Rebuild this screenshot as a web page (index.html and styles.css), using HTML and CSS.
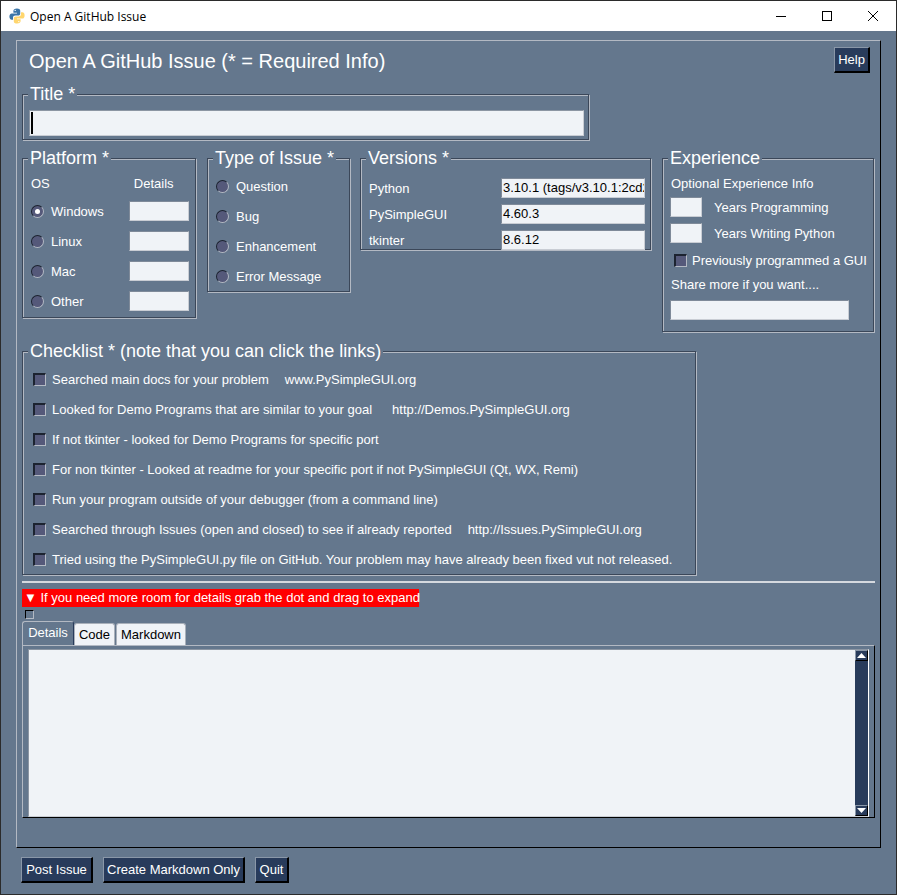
FILE: index.html
```html
<!DOCTYPE html>
<html lang="en">
<head>
<meta charset="utf-8">
<title>Open A GitHub Issue</title>
<link rel="stylesheet" href="styles.css">
</head>
<body>
<div class="window">
  <header class="titlebar">
    <svg class="applogo" viewBox="0 0 16 16" width="16" height="16"><path fill="#3a75a8" d="M8 0.5C5.6 0.5 4.4 1.4 4.4 3V4.8H8V5.4H2.8C1.2 5.4 0.4 6.8 0.4 8.6c0 2 .9 3.2 2.3 3.2H4V9.8c0-1.3 1-2.2 2.3-2.2h3c1 0 1.9-.9 1.9-1.9V2.6C11.2 1.2 9.8 .5 8 .5z"/><path fill="#ffd66e" d="M8 15.5c2.4 0 3.6-.9 3.6-2.5v-1.8H8v-.6h5.2c1.6 0 2.4-1.4 2.4-3.2 0-2-.9-3.2-2.3-3.2H12v2c0 1.3-1 2.2-2.3 2.2h-3c-1 0-1.9.9-1.9 1.9v3.1c0 1.4 1.4 2.1 3.2 2.1z"/><circle cx="6.2" cy="2.4" r=".7" fill="#fff"/><circle cx="9.8" cy="13.6" r=".7" fill="#fff"/></svg>
    <span class="apptitle">Open A GitHub Issue</span>
    <div class="winctl">
      <svg viewBox="0 0 10 10" width="10" height="10"><path d="M0 5.5H10" stroke="#000" fill="none"/></svg>
      <svg viewBox="0 0 10 10" width="10" height="10"><rect x=".5" y=".5" width="9" height="9" stroke="#000" fill="none"/></svg>
      <svg viewBox="0 0 10 10" width="10" height="10"><path d="M0 0L10 10M10 0L0 10" stroke="#000" fill="none"/></svg>
    </div>
  </header>

  <main class="content">
    <section class="frame">
      <div class="head">
        <h1 class="heading">Open A GitHub Issue (* = Required Info)</h1>
        <button class="btn help">Help</button>
      </div>

      <fieldset class="group g-title">
        <span class="legend">Title *</span>
        <div class="titleinput"><span class="caret"></span></div>
      </fieldset>

      <div class="row-groups">
        <fieldset class="group g-platform">
          <span class="legend">Platform *</span>
          <div class="os-head"><span>OS</span><span>Details</span></div>
          <div class="os-row"><span class="radio on"></span><span class="os-name">Windows</span><span class="input small"></span></div>
          <div class="os-row"><span class="radio"></span><span class="os-name">Linux</span><span class="input small"></span></div>
          <div class="os-row"><span class="radio"></span><span class="os-name">Mac</span><span class="input small"></span></div>
          <div class="os-row"><span class="radio"></span><span class="os-name">Other</span><span class="input small"></span></div>
        </fieldset>

        <fieldset class="group g-type">
          <span class="legend">Type of Issue *</span>
          <div class="type-row"><span class="radio"></span><span>Question</span></div>
          <div class="type-row"><span class="radio"></span><span>Bug</span></div>
          <div class="type-row"><span class="radio"></span><span>Enhancement</span></div>
          <div class="type-row"><span class="radio"></span><span>Error Message</span></div>
        </fieldset>

        <fieldset class="group g-versions">
          <span class="legend">Versions *</span>
          <div class="ver-row"><span class="ver-name">Python</span><span class="input ver">3.10.1 (tags/v3.10.1:2cd268a)</span></div>
          <div class="ver-row"><span class="ver-name">PySimpleGUI</span><span class="input ver">4.60.3</span></div>
          <div class="ver-row"><span class="ver-name">tkinter</span><span class="input ver">8.6.12</span></div>
        </fieldset>

        <fieldset class="group g-exp">
          <span class="legend">Experience</span>
          <div class="exp-line first">Optional Experience Info</div>
          <div class="exp-row"><span class="input years"></span><span>Years Programming</span></div>
          <div class="exp-row"><span class="input years"></span><span>Years Writing Python</span></div>
          <div class="exp-check"><span class="check"></span><span>Previously programmed a GUI</span></div>
          <div class="exp-line share">Share more if you want....</div>
          <span class="input sharebox"></span>
        </fieldset>
      </div>

      <fieldset class="group g-check">
        <span class="legend">Checklist * (note that you can click the links)</span>
        <div class="check-row"><span class="check"></span><span>Searched main docs for your problem</span><span class="link l1">www.PySimpleGUI.org</span></div>
        <div class="check-row"><span class="check"></span><span>Looked for Demo Programs that are similar to your goal</span><span class="link l2">http://Demos.PySimpleGUI.org</span></div>
        <div class="check-row"><span class="check"></span><span>If not tkinter - looked for Demo Programs for specific port</span></div>
        <div class="check-row"><span class="check"></span><span>For non tkinter - Looked at readme for your specific port if not PySimpleGUI (Qt, WX, Remi)</span></div>
        <div class="check-row"><span class="check"></span><span>Run your program outside of your debugger (from a command line)</span></div>
        <div class="check-row"><span class="check"></span><span>Searched through Issues (open and closed) to see if already reported</span><span class="link l3">http://Issues.PySimpleGUI.org</span></div>
        <div class="check-row"><span class="check"></span><span>Tried using the PySimpleGUI.py file on GitHub. Your problem may have already been fixed vut not released.</span></div>
      </fieldset>

      <div class="separator"></div>
      <div class="notice">▼ If you need more room for details grab the dot and drag to expand</div>
      <div class="sash"></div>

      <nav class="tabs">
        <span class="tab active">Details</span>
        <span class="tab t-code">Code</span>
        <span class="tab t-md">Markdown</span>
      </nav>
      <div class="tabpanel">
        <div class="multiline">
          <div class="textarea"></div>
          <div class="scrollbar">
            <span class="sb-btn"><svg viewBox="0 0 9 5" width="9" height="5"><path d="M4.5 0L9 5H0z" fill="#fff"/></svg></span>
            <span class="sb-track"></span>
            <span class="sb-btn"><svg viewBox="0 0 9 5" width="9" height="5"><path d="M0 0H9L4.5 5z" fill="#fff"/></svg></span>
          </div>
        </div>
      </div>
    </section>

    <footer class="actions">
      <button class="btn post">Post Issue</button>
      <button class="btn markdown">Create Markdown Only</button>
      <button class="btn quit">Quit</button>
    </footer>
  </main>
</div>
</body>
</html>
```
FILE: styles.css
```css
* { box-sizing: border-box; }
html, body { margin: 0; padding: 0; }
body {
  width: 897px;
  height: 895px;
  overflow: hidden;
  font-family: "Liberation Sans", Arial, sans-serif;
  font-size: 13px;
  color: #fff;
}
.window {
  width: 897px;
  height: 895px;
  border: 1px solid #2b2b2b;
  background: #64778d;
  display: flex;
  flex-direction: column;
}
.titlebar {
  height: 30px;
  flex: none;
  background: #fff;
  display: flex;
  align-items: center;
  padding-left: 8px;
  color: #000;
  font-family: "Open Sans", "Noto Sans", sans-serif;
  font-size: 12px;
}
.apptitle { margin-left: 5px; }
.winctl {
  margin-left: auto;
  display: flex;
  gap: 36px;
  padding-right: 18px;
}
.content {
  flex: 1;
  padding: 9px 15px 0;
  display: flex;
  flex-direction: column;
}
.frame {
  width: 865px;
  height: 808px;
  flex: none;
  border: 1px solid;
  border-color: #b3b9c3 #000 #000 #b3b9c3;
  padding: 0 0 0 5px;
}
.head {
  height: 53px;
  display: flex;
  align-items: flex-start;
  justify-content: space-between;
  padding: 6px 10px 0 7px;
}
.heading {
  margin: 0;
  font-size: 20px;
  font-weight: 400;
  line-height: 28px;
}
.btn {
  display: block;
  padding: 0;
  height: 26px;
  background: #283b5b;
  color: #fff;
  font: 13px "Liberation Sans", Arial, sans-serif;
  border: 1px solid;
  border-color: #8a97a8 #000 #000 #8a97a8;
  border-width: 1px 2px 2px 1px;
}
.help { width: 36px; margin-top: 0; }

.group {
  position: relative;
  margin: 0;
  padding: 0;
  min-width: 0;
  border: 1px solid #3b4759;
  box-shadow: 1px 1px 0 #b3b9c3, inset 1px 1px 0 #b3b9c3;
}
.legend {
  position: absolute;
  left: 5px;
  top: -12px;
  padding: 0 2px 0 2px;
  background: #64778d;
  font-size: 18px;
  line-height: 22px;
  white-space: nowrap;
}
.input {
  display: block;
  background: #f0f3f7;
  color: #000;
  border: 1px solid;
  border-color: #7f8a99 #c9cdd4 #c9cdd4 #7f8a99;
  overflow: hidden;
  white-space: nowrap;
}
.g-title {
  width: 567px;
  height: 46px;
  margin-top: 0;
  padding: 15px 0 0 6px;
}
.titleinput {
  width: 555px;
  height: 26px;
  background: #f0f3f7;
  border: 1px solid;
  border-color: #8c96a3 #c9cdd4 #c9cdd4 #8c96a3;
  padding: 1px 0 0 1px;
}
.caret { display: block; width: 2px; height: 22px; background: #000; }

.row-groups {
  display: flex;
  align-items: flex-start;
  margin-top: 18px;
}
.g-platform { width: 174px; height: 160px; padding: 17px 0 0 8px; }
.g-type { width: 143px; height: 134px; margin-left: 11px; padding: 12px 0 0 8px; }
.g-versions { width: 291px; height: 92px; margin-left: 10px; padding: 16px 0 0 8px; }
.g-exp { width: 212px; height: 174px; margin-left: 11px; padding: 17px 0 0 8px; }

.os-head { display: flex; height: 15px; line-height: 15px; }
.os-head span:last-child { margin-left: 84px; }
.os-row { display: flex; align-items: center; height: 30px; }
.os-head + .os-row { margin-top: 5px; }
.os-name { width: 78px; margin-left: 7px; }
.small { width: 60px; height: 20px; }
.radio {
  display: block;
  flex: none;
  width: 13px;
  height: 13px;
  border-radius: 50%;
  background: #55597a;
  border: 1px solid;
  border-color: #1c2330 #b3b9c3 #b3b9c3 #1c2330;
  position: relative;
}
.on::after {
  content: "";
  position: absolute;
  left: 3px;
  top: 3px;
  width: 5px;
  height: 5px;
  border-radius: 50%;
  background: #fff;
}
.type-row { display: flex; align-items: center; gap: 7px; height: 30px; }
.ver-row { display: flex; align-items: center; height: 26px; }
.ver-name { width: 132px; }
.ver { width: 144px; height: 20px; font-size: 13px; line-height: 18px; padding-left: 1px; }
.exp-line { height: 15px; line-height: 15px; }
.exp-row { display: flex; align-items: center; height: 26px; gap: 12px; }
.first { margin-bottom: 3px; }
.years { width: 32px; height: 20px; margin-left: -1px; }
.exp-check { display: flex; align-items: center; gap: 5px; height: 28px; margin-left: 3px; }
.share { margin-top: 3px; }
.sharebox { width: 179px; height: 20px; margin: 8px 0 0 -1px; }
.check {
  display: block;
  flex: none;
  width: 13px;
  height: 13px;
  background: #55597a;
  border: 1px solid;
  border-width: 2px 1px 1px 2px;
  border-color: #1c2330 #b3b9c3 #b3b9c3 #1c2330;
}

.g-check {
  width: 674px;
  height: 224px;
  margin-top: 19px;
  padding: 12px 0 0 10px;
}
.check-row { display: flex; align-items: center; gap: 6px; height: 30px; white-space: nowrap; }
.l1 { margin-left: 10px; }
.l2 { margin-left: 14px; }
.l3 { margin-left: 10px; }

.separator {
  width: 853px;
  height: 2px;
  margin-top: 6px;
  background: #d5d9df;
}
.notice {
  width: 397px;
  height: 18px;
  margin-top: 6px;
  background: #f00;
  line-height: 18px;
  padding-left: 2px;
  white-space: nowrap;
}
.sash {
  width: 9px;
  height: 9px;
  margin: 3px 0 0 3px;
  background: #64778d;
  border: 1px solid;
  border-color: #000 #b3b9c3 #b3b9c3 #000;
}
.tabs { display: flex; margin-top: 3px; height: 23px; align-items: flex-end; }
.tab {
  height: 22px;
  line-height: 21px;
  text-align: center;
  background: #f0f3f7;
  color: #000;
  border: 1px solid #a9b0ba;
  border-bottom: 0;
  border-radius: 3px 3px 0 0;
  margin-right: 1px;
}
.tab.active { width: 52px; height: 24px; background: #64778d; color: #fff; margin-right: 0; border-color: #b3b9c3 #283b5b #64778d #b3b9c3; }
.t-code { width: 41px; }
.t-md { width: 70px; }
.tabpanel {
  width: 853px;
  height: 173px;
  border: 1px solid;
  border-color: #b3b9c3 #000 #000 #b3b9c3;
  padding: 3px 0 0 5px;
}
.multiline { display: flex; width: 841px; height: 168px; border: 1px solid; border-color: #8c96a3 #fff #c9cdd4 #8c96a3; }
.textarea { flex: 1; background: #f0f3f7; }
.scrollbar {
  flex: none;
  width: 13px;
  display: flex;
  flex-direction: column;
  background: #283b5b;
}
.sb-btn {
  flex: none;
  height: 11px;
  display: flex;
  align-items: center;
  justify-content: center;
  background: #283b5b;
  border: 1px solid #000;
  border-color: #8a97a8 #000 #000 #8a97a8;
}
.sb-track { flex: 1; }

.actions { display: flex; margin-top: 9px; padding-left: 5px; }
.post { width: 72px; }
.markdown { width: 142px; margin-left: 10px; }
.quit { width: 34px; margin-left: 10px; }
```
